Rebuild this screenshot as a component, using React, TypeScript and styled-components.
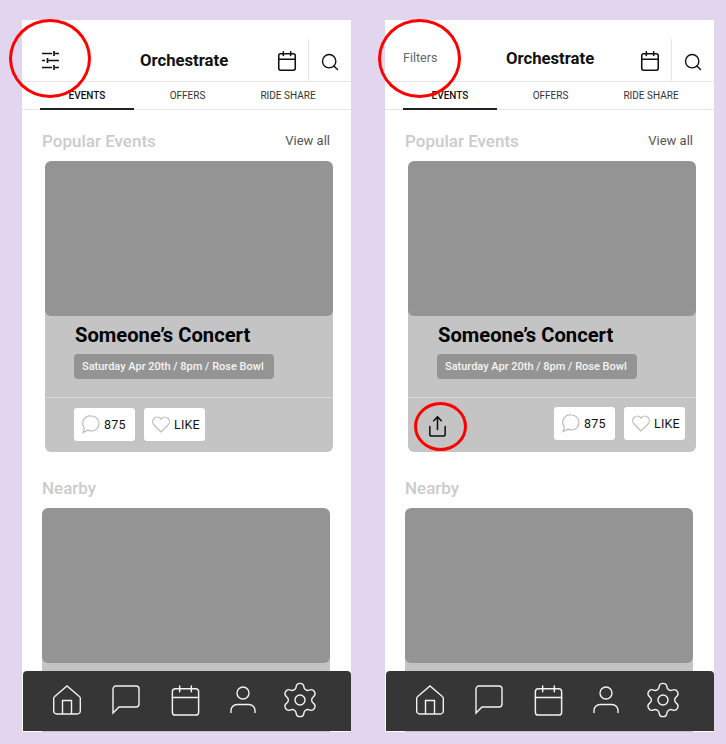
// App.tsx
import React from "react";
import styled, { createGlobalStyle } from "styled-components";
import { Calendar, Search, Settings, Share } from "lucide-react";

const GlobalStyle = createGlobalStyle`
  html, body {
    margin: 0;
    padding: 0;
    background: #e2d5ee;
    font-family: Roboto, "Liberation Sans", sans-serif;
  }
`;

const Page = styled.div`
  width: 726px;
  height: 744px;
  box-sizing: border-box;
  padding: 20px 12px 0 22px;
  display: flex;
  gap: 34px;
  overflow: hidden;
`;

const Phone = styled.div`
  position: relative;
  width: 329px;
  height: 712px;
  background: #fff;
  overflow: hidden;
  flex: none;
`;

const Header = styled.header`
  height: 62px;
  box-sizing: border-box;
  border-bottom: 1px solid #e6e6e6;
  display: flex;
  align-items: flex-end;
`;

const HeaderLeft = styled.div<{ $width: number }>`
  width: ${(p) => p.$width}px;
  flex: none;
  height: 100%;
  box-sizing: border-box;
`;

const FilterSlot = styled(HeaderLeft)`
  padding: 31px 0 0 20px;
`;

const FilterLabel = styled(HeaderLeft)`
  padding: 30px 0 0 18px;
  font-size: 12.5px;
  line-height: 16px;
  color: #666;
`;

const Title = styled.div<{ $up: number }>`
  flex: 1;
  height: 100%;
  box-sizing: border-box;
  padding-top: ${(p) => 30 - p.$up}px;
  font-size: 16.7px;
  line-height: 22px;
  font-weight: 700;
  color: #111;
`;

const HeaderIcons = styled.div`
  display: flex;
  flex: none;
  height: 42px;
  color: #111;
`;

const IconCell = styled.div`
  width: 31px;
  display: flex;
  align-items: center;
  justify-content: center;
  padding-top: 1px;
  box-sizing: border-box;
`;

const SearchCell = styled(IconCell)`
  width: 43px;
  margin-left: 6px;
  padding-top: 3px;
  border-left: 1px solid #e6e6e6;
`;

const Tabs = styled.nav`
  height: 28px;
  box-sizing: border-box;
  border-bottom: 1px solid #e6e6e6;
  display: flex;
  padding: 0 0 0 18px;
`;

const Tab = styled.div<{ $active?: boolean; $width: number }>`
  width: ${(p) => p.$width}px;
  height: 28px;
  box-sizing: border-box;
  flex: none;
  text-align: center;
  font-size: 10px;
  line-height: 27px;
  color: ${(p) => (p.$active ? "#111" : "#333")};
  font-weight: ${(p) => (p.$active ? 500 : 400)};
  border-bottom: 2px solid ${(p) => (p.$active ? "#222" : "transparent")};
`;

const SectionHead = styled.div<{ $top: number }>`
  display: flex;
  justify-content: space-between;
  align-items: center;
  padding: ${(p) => p.$top}px 21px 0 20px;
  height: 22px;
`;

const SectionTitle = styled.h2`
  margin: 0;
  font-size: 17px;
  line-height: 22px;
  font-weight: 500;
  color: #cbcbcb;
`;

const ViewAll = styled.span`
  font-size: 13px;
  margin: -2px 0 0 0;
  color: #555;
`;

const Card = styled.article<{ $inset: number }>`
  margin: 9px 0 0 ${(p) => p.$inset}px;
  width: 288px;
  background: #c4c4c4;
  border-radius: 6px;
  overflow: hidden;
`;

const CardImage = styled.div`
  height: 155px;
  background: #949494;
  border-radius: 6px;
`;

const CardBody = styled.div`
  height: 82px;
  box-sizing: border-box;
  padding: 7px 0 0 30px;
  border-bottom: 1px solid #d8d8d8;
`;

const CardTitle = styled.h3`
  margin: 0;
  font-size: 20.2px;
  line-height: 24px;
  font-weight: 700;
  color: #000;
`;

const DatePill = styled.div`
  margin: 7px 0 0 -1px;
  width: 200px;
  height: 25px;
  box-sizing: border-box;
  border-radius: 4px;
  background: #949494;
  color: #f4f4f4;
  font-size: 11px;
  font-weight: 500;
  line-height: 25px;
  padding-left: 8px;
  white-space: nowrap;
`;

const CardFooter = styled.div<{ $split?: boolean }>`
  height: 54px;
  box-sizing: border-box;
  display: flex;
  align-items: flex-start;
  justify-content: ${(p) => (p.$split ? "space-between" : "flex-start")};
  padding: ${(p) => (p.$split ? "9px 11px 0 18px" : "10px 0 0 29px")};
`;

const ShareButton = styled.div`
  color: #111;
  padding-top: 8px;
  display: flex;
`;

const Actions = styled.div`
  display: flex;
  gap: 9px;
`;

const ActionButton = styled.div`
  width: 61px;
  height: 33px;
  box-sizing: border-box;
  border-radius: 3px;
  background: #fff;
  display: flex;
  align-items: center;
  gap: 4px;
  padding-left: 8px;
  font-size: 12.5px;
  letter-spacing: 0.2px;
  color: #111;
  svg {
    color: #bcbcbc;
    flex: none;
  }
`;

const BottomNav = styled.footer`
  position: absolute;
  left: 1px;
  right: 0;
  bottom: 1px;
  height: 60px;
  background: #363636;
  border-radius: 4px 4px 0 0;
  display: flex;
  align-items: center;
  padding: 0 0 2px 14px;
  box-sizing: border-box;
  color: #f2f2f2;
`;

const NavItem = styled.div<{ $width: number }>`
  width: ${(p) => p.$width}px;
  flex: none;
  display: flex;
  justify-content: center;
`;

const Ring = styled.div<{ $x: number; $y: number; $w: number; $h: number }>`
  position: absolute;
  left: ${(p) => p.$x}px;
  top: ${(p) => p.$y}px;
  width: ${(p) => p.$w}px;
  height: ${(p) => p.$h}px;
  box-sizing: border-box;
  border: 3px solid #f00;
  border-radius: 50%;
`;

const FilterIcon = () => (
  <svg width="17" height="19" viewBox="0 0 17 19" fill="none" stroke="#111" strokeWidth="1.7">
    <path d="M0 2.500H10M13 2.500H17M12 0V5" />
    <path d="M0 9.500H3M6.500 9.500H17M5.500 7V12" />
    <path d="M0 16.500H10M13 16.500H17M12 14V19" />
  </svg>
);

const BubbleIcon = () => (
  <svg width="18" height="19" viewBox="0 0 18 19" fill="none" stroke="currentColor" strokeWidth="1.2">
    <path d="M9.500 1a7.500 7.500 0 0 1 0 15c-1.400 0-2.600-.3-3.700-.9L1 17.500l1.400-4.400A7.500 7.500 0 0 1 9.500 1Z" />
  </svg>
);

const HeartIcon = () => (
  <svg width="18" height="17" viewBox="0 0 18 17" fill="none" stroke="currentColor" strokeWidth="1.2">
    <path d="M9 16 2 9a4.600 4.600 0 0 1 0-6.500 4.600 4.600 0 0 1 6.500 0l.5.6.5-.6A4.600 4.600 0 0 1 16 2.500 4.600 4.600 0 0 1 16 9Z" />
  </svg>
);

const HomeIcon = () => (
  <svg width="28" height="30" viewBox="0 0 28 30" fill="none" stroke="currentColor" strokeWidth="1.4">
    <path d="M1.700 11.500 14 1l12.300 10.500a2 2 0 0 1 1 1.700V26a3 3 0 0 1-3 3H3.700a3 3 0 0 1-3-3V13.200a2 2 0 0 1 1-1.700Z" />
    <path d="M9.500 29V15.500H18.500V29" />
  </svg>
);

const ChatIcon = () => (
  <svg width="28" height="30" viewBox="0 0 28 30" fill="none" stroke="currentColor" strokeWidth="1.4">
    <path d="M1 28V4a3 3 0 0 1 3-3H24a3 3 0 0 1 3 3V19a3 3 0 0 1-3 3H7Z" />
  </svg>
);

const PersonIcon = () => (
  <svg width="26" height="28" viewBox="0 0 26 28" fill="none" stroke="currentColor" strokeWidth="1.4">
    <circle cx="13" cy="7" r="6" />
    <path d="M1 27V24.500a6 6 0 0 1 6-6H19a6 6 0 0 1 6 6V27" />
  </svg>
);

const Nav = () => (
  <BottomNav>
    <NavItem $width={59.5}><HomeIcon /></NavItem>
    <NavItem $width={59.5}><ChatIcon /></NavItem>
    <NavItem $width={59}><Calendar size={35} strokeWidth={1} /></NavItem>
    <NavItem $width={56.5}><PersonIcon /></NavItem>
    <NavItem $width={57}><Settings size={40} strokeWidth={0.85} /></NavItem>
  </BottomNav>
);

const CardActions = () => (
  <Actions>
    <ActionButton>
      <BubbleIcon />
      875
    </ActionButton>
    <ActionButton>
      <HeartIcon />
      LIKE
    </ActionButton>
  </Actions>
);

const Screen: React.FC<{ variant: "icon" | "label" }> = ({ variant }) => {
  const isLabel = variant === "label";
  return (
    <Phone>
      <Header>
        {isLabel ? (
          <FilterLabel $width={121}>Filters</FilterLabel>
        ) : (
          <FilterSlot $width={118}><FilterIcon /></FilterSlot>
        )}
        <Title $up={isLabel ? 2 : 0}>Orchestrate</Title>
        <HeaderIcons>
          <IconCell><Calendar size={22} strokeWidth={1.7} /></IconCell>
          <SearchCell><Search size={20} strokeWidth={1.7} /></SearchCell>
        </HeaderIcons>
      </Header>
      <Tabs>
        <Tab $active $width={94}>EVENTS</Tab>
        <Tab $width={107}>OFFERS</Tab>
        <Tab $width={94}>RIDE SHARE</Tab>
      </Tabs>
      <SectionHead $top={20}>
        <SectionTitle>Popular Events</SectionTitle>
        <ViewAll>View all</ViewAll>
      </SectionHead>
      <Card $inset={23}>
        <CardImage />
        <CardBody>
          <CardTitle>Someone’s Concert</CardTitle>
          <DatePill>Saturday Apr 20th / 8pm / Rose Bowl</DatePill>
        </CardBody>
        <CardFooter $split={isLabel}>
          {isLabel && (
            <ShareButton><Share size={23} strokeWidth={1.6} /></ShareButton>
          )}
          <CardActions />
        </CardFooter>
      </Card>
      <SectionHead $top={25}>
        <SectionTitle>Nearby</SectionTitle>
      </SectionHead>
      <Card $inset={20}>
        <CardImage />
        <CardBody />
      </Card>
      <Nav />
    </Phone>
  );
};

const App: React.FC = () => (
  <Page>
    <GlobalStyle />
    <Screen variant="icon" />
    <Screen variant="label" />
    <Ring $x={9} $y={19} $w={82} $h={79} />
    <Ring $x={378} $y={19} $w={83} $h={79} />
    <Ring $x={414} $y={402} $w={53} $h={49} />
  </Page>
);

export default App;
